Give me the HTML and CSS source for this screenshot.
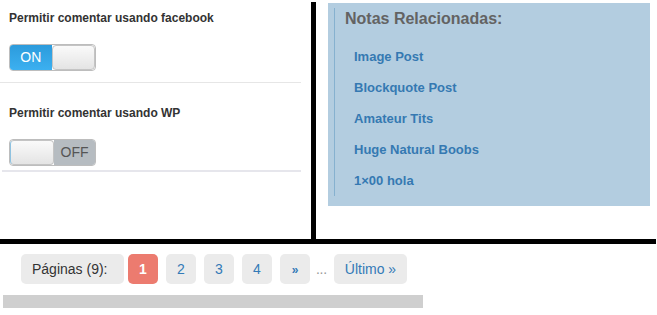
FILE: index.html
```html
<!DOCTYPE html>
<html lang="es">
<head>
<meta charset="utf-8">
<title>Notas</title>
<link rel="stylesheet" href="styles.css">
</head>
<body>
<div class="page">
  <div class="top">
    <div class="left">
      <div class="opt first">
        <p class="label">Permitir comentar usando facebook</p>
        <div class="switch on"><span class="state">ON</span><span class="knob"></span></div>
      </div>
      <div class="opt second">
        <p class="label">Permitir comentar usando WP</p>
        <div class="switch off"><span class="knob"></span><span class="state">OFF</span></div>
      </div>
    </div>
    <div class="right">
      <div class="panel">
        <div class="inner">
          <h3 class="title">Notas Relacionadas:</h3>
          <ul class="links">
            <li><a href="#">Image Post</a></li>
            <li><a href="#">Blockquote Post</a></li>
            <li><a href="#">Amateur Tits</a></li>
            <li><a href="#">Huge Natural Boobs</a></li>
            <li><a href="#">1×00 hola</a></li>
          </ul>
        </div>
      </div>
    </div>
  </div>
  <nav class="pager">
    <span class="pbox plabel">Páginas (9):</span>
    <span class="pbox current">1</span>
    <a class="pbox num" href="#">2</a>
    <a class="pbox num" href="#">3</a>
    <a class="pbox num" href="#">4</a>
    <a class="pbox num next" href="#">»</a>
    <span class="dots">...</span>
    <a class="pbox last" href="#">Último »</a>
  </nav>
  <div class="bar"></div>
</div>
</body>
</html>
```

FILE: styles.css
```css
* { box-sizing: border-box; }
html, body { margin: 0; padding: 0; background: #fff; }
body { font-family: "Liberation Sans", Arial, sans-serif; color: #333; }

.page { width: 657px; }

.top {
  display: flex;
  width: 656px;
  height: 244px;
  border-bottom: 5px solid #000;
}

.left {
  width: 316px;
  margin-top: 2px;
  border-right: 5px solid #000;
}

.opt {
  width: 301px;
  padding-left: 9px;
}
.opt.first {
  padding-top: 9px;
  padding-bottom: 11px;
  border-bottom: 1px solid #e6e6e6;
}
.opt.second {
  margin-left: 2px;
  padding-left: 7px;
  padding-top: 23px;
  padding-bottom: 4px;
  width: 299px;
  border-bottom: 2px solid #e6e6ec;
}

.label {
  margin: 0 0 19px;
  font-size: 12px;
  line-height: 14px;
  font-weight: bold;
  color: #333;
}

.switch {
  display: flex;
  width: 87px;
  height: 27px;
  border: 1px solid #bdbdbd;
  border-radius: 4px;
  overflow: hidden;
}
.switch .state {
  display: block;
  font-size: 14px;
  line-height: 25px;
  text-align: center;
}
.switch .knob {
  display: block;
  width: 44px;
  height: 25px;
  background: linear-gradient(#fafafa, #e4e4e4);
  border: 1px solid #c4c4c4;
  border-radius: 4px;
}
.switch.on .state {
  width: 42px;
  color: #fff;
  background: linear-gradient(#2c9bdc, #3cb0f0);
}
.switch.off .state {
  width: 41px;
  color: #555;
  background: #b6bcc1;
}
.switch.off .knob { border-color: #c4c4c4; border-left-color: #8fc2e0; }

.right {
  flex: 1;
  padding: 3px 0 0 12px;
}
.panel {
  width: 322px;
  height: 203px;
  background: #b3cde0;
  padding: 5px 0 0 6px;
}
.inner {
  height: 188px;
  border-left: 1px solid #86b1cf;
  padding: 2px 0 0 10px;
}
.title {
  margin: 0;
  font-size: 16px;
  line-height: 18px;
  font-weight: bold;
  color: #636363;
}
.links {
  list-style: none;
  margin: 13px 0 0;
  padding: 0 0 0 9px;
}
.links li {
  height: 31px;
  line-height: 31px;
  font-size: 13px;
  font-weight: bold;
}
.links a {
  color: #3579b2;
  text-decoration: none;
}

.pager {
  display: flex;
  align-items: center;
  margin: 10px 0 0 21px;
  height: 30px;
}
.pbox {
  display: block;
  height: 30px;
  padding: 0 11px;
  font-size: 14px;
  line-height: 30px;
  background: #ebebeb;
  border-radius: 5px;
  text-decoration: none;
  color: #337ab7;
  white-space: nowrap;
}
.plabel {
  width: 103px;
  color: #333;
  margin-right: 4px;
}
.current {
  width: 30px;
  padding: 0;
  text-align: center;
  background: #ec7b6f;
  color: #fff;
  font-weight: bold;
  margin-right: 8px;
}
.num {
  width: 30px;
  padding: 0;
  text-align: center;
  margin-right: 8px;
}
.next {
  font-size: 12px;
  font-weight: bold;
  margin-right: 6px;
  line-height: 32px;
}
.dots {
  font-size: 14px;
  color: #999;
  margin-right: 7px;
  width: 11px;
  overflow: hidden;
  white-space: nowrap;
  letter-spacing: -0.3px;
}
.last { width: 73px; padding: 0; text-align: center; }

.bar {
  margin: 11px 0 0 3px;
  width: 420px;
  height: 13px;
  background: #cfcfcf;
}
```
